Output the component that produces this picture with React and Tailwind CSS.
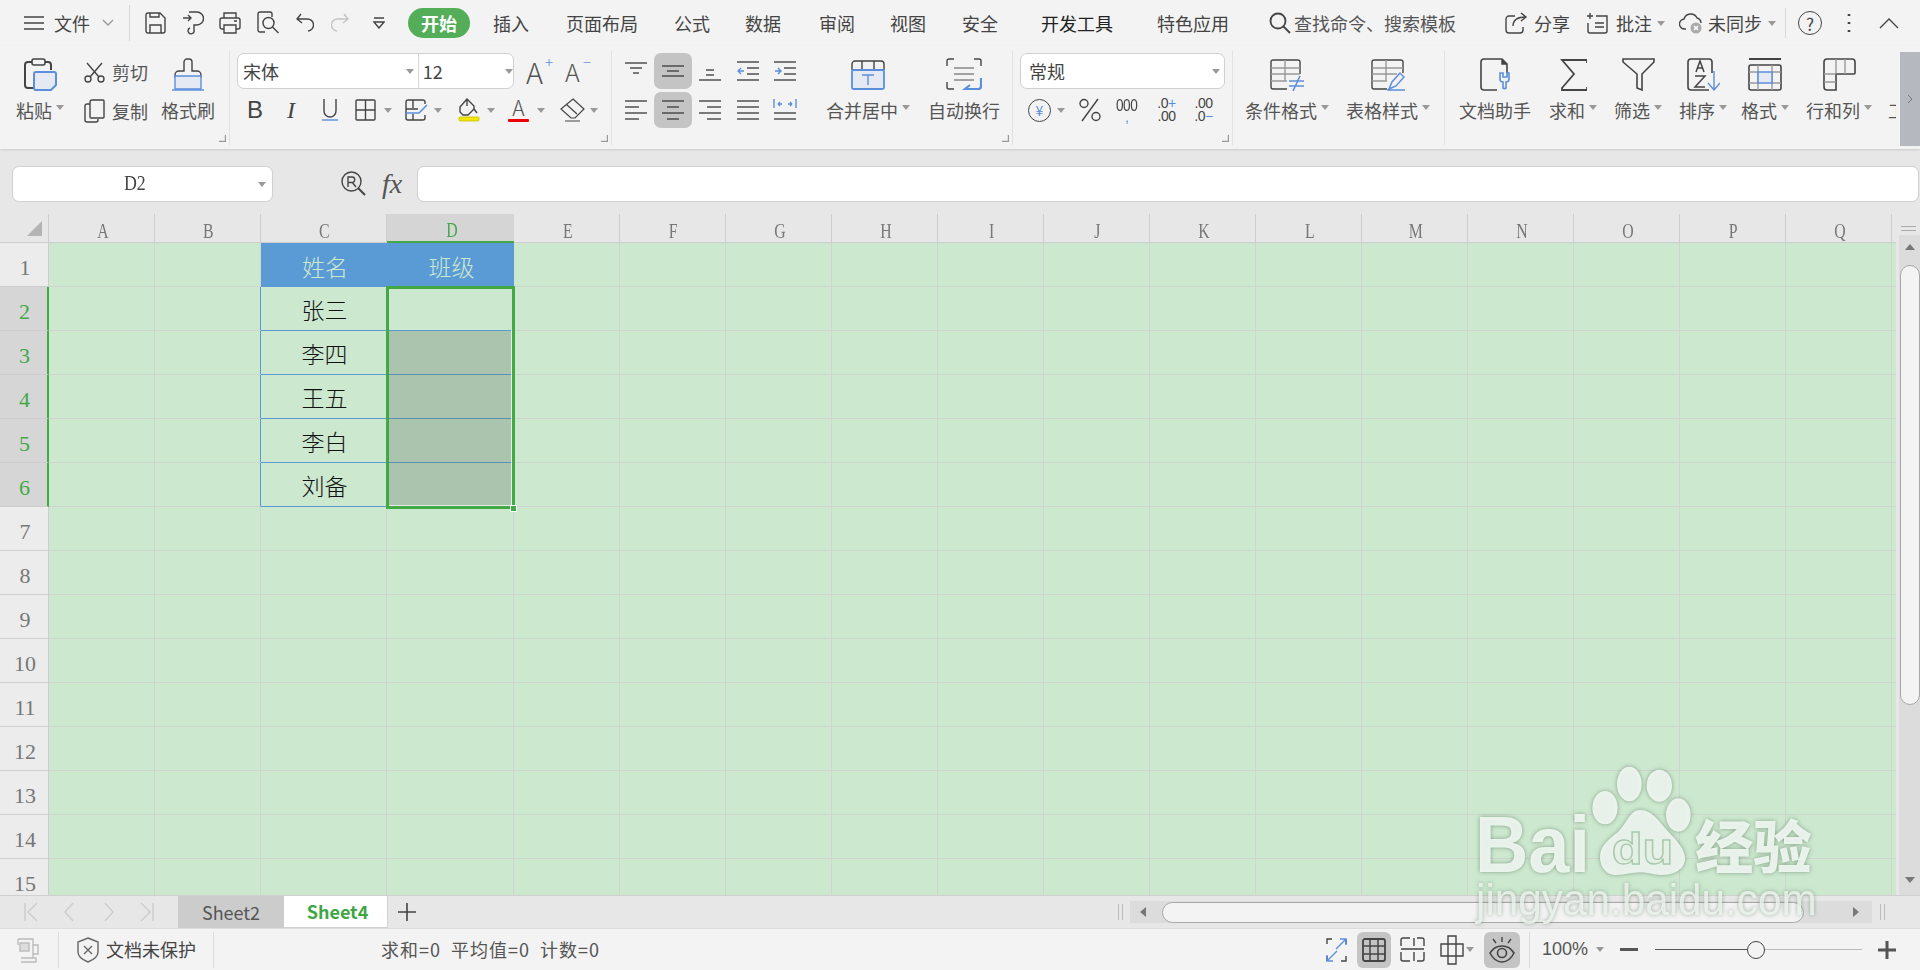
import React from 'react';

const INK = '#444';
const BLUE = '#5b8fdc';

const Svg = ({ w, h, children, className = '' }) => (
  <svg width={w} height={h} viewBox={`0 0 ${w} ${h}`} fill="none" stroke={INK} strokeWidth="1.4" className={`shrink-0 ${className}`}>
    {children}
  </svg>
);

const Caret = ({ className = '' }) => (
  <span className={`inline-block shrink-0 w-0 h-0 border-x-[4px] border-t-[5px] border-x-transparent border-t-[#999] ${className}`} />
);

const Corner = () => (
  <svg width="7" height="7" viewBox="0 0 7 7" className="absolute right-[3px] bottom-[3px]" fill="none" stroke="#999" strokeWidth="1.2">
    <path d="M0 6.4h6.4V0" />
  </svg>
);

// 大图标按钮：上面图标，下面文字
const Big = ({ icon, label, caret, className = '' }) => (
  <div className={`flex flex-col items-center shrink-0 pt-[7px] ${className}`}>
    <div className="h-[33px] flex items-center justify-center">{icon}</div>
    <div className="mt-[7px] h-[24px] flex items-center text-[18px] leading-[24px] text-[#555] whitespace-nowrap">
      {label}
      {caret && <Caret className="ml-[4px] -mt-[6px]" />}
    </div>
  </div>
);

const Section = ({ className = '', children, border = true }) => (
  <div className={`relative shrink-0 mt-[5px] mb-[4px] ${border ? 'border-r border-[#e2e2e2]' : ''} ${className}`}>{children}</div>
);

const tabs = [
  { t: '插入', c: 'ml-[23px]' },
  { t: '页面布局', c: 'ml-[37px]' },
  { t: '公式', c: 'ml-[36px]' },
  { t: '数据', c: 'ml-[35px]' },
  { t: '审阅', c: 'ml-[38px]' },
  { t: '视图', c: 'ml-[35px]' },
  { t: '安全', c: 'ml-[36px]' },
  { t: '开发工具', c: 'ml-[43px] text-[#222]' },
  { t: '特色应用', c: 'ml-[44px]' },
];

function TitleBar() {
  return (
    <div className="h-[46px] flex items-center text-[18px] text-[#444]">
      <Svg w={20} h={16} className="ml-[24px]"><path d="M0 2h20M0 8h20M0 14h20" /></Svg>
      <span className="ml-[10px]">文件</span>
      <Svg w={12} h={8} className="ml-[12px]"><path d="M1 1l5 5 5-5" stroke="#999" /></Svg>
      <div className="ml-[15px] w-px h-[36px] bg-[#d8d8d8]" />
      <Svg w={21} h={22} className="ml-[15px]"><path d="M3 1h12l5 5v13a2 2 0 0 1-2 2H3a2 2 0 0 1-2-2V3a2 2 0 0 1 2-2zM5 21v-8h11v8M5 1v4h9V1" /></Svg>
      <Svg w={21} h={24} className="ml-[17px]"><path d="M0 7h8M5 4l3 3-3 3M6 1h8a6 6 0 0 1 0 13h-3v5a3 3 0 1 1-4-2" /></Svg>
      <Svg w={22} h={22} className="ml-[15px]"><path d="M5 6V1h12v5M5 17H3a2 2 0 0 1-2-2V8a2 2 0 0 1 2-2h16a2 2 0 0 1 2 2v7a2 2 0 0 1-2 2h-2M5 13h12v8H5zM15 9h3" /></Svg>
      <Svg w={23} h={24} className="ml-[16px]"><path d="M8 21H3a2 2 0 0 1-2-2V3a2 2 0 0 1 2-2h10a2 2 0 0 1 2 2v3" /><circle cx="11.5" cy="12" r="5.5" /><path d="M15.5 16l6 6" /></Svg>
      <Svg w={18} h={20} className="ml-[16px]"><path d="M5 1L1 6l5 4M1 6h10a6 6 0 0 1 1 12" /></Svg>
      <Svg w={18} h={20} className="ml-[17px]"><path d="M13 1l4 5-5 4M17 6H7a6 6 0 0 0-1 12" stroke="#c4c4c4" /></Svg>
      <Svg w={12} h={12} className="ml-[24px]"><path d="M1 1h10M1 5h10l-5 6z" /></Svg>
      <div className="ml-[23px] w-[62px] h-[30px] rounded-full bg-[#54ad59] text-white font-bold flex items-center justify-center">开始</div>
      {tabs.map((x) => (
        <span key={x.t} className={x.c}>{x.t}</span>
      ))}
      <Svg w={22} h={22} className="ml-[40px]"><circle cx="9" cy="9" r="7.5" strokeWidth="1.8" /><path d="M14.5 14.5l6.5 6.5" strokeWidth="1.8" /></Svg>
      <span className="ml-[3px] text-[#555]">查找命令、搜索模板</span>
      <Svg w={23} h={22} className="ml-[49px]"><path d="M10 4H4a3 3 0 0 0-3 3v11a3 3 0 0 0 3 3h11a3 3 0 0 0 3-3v-3M8 14c0-6 5-9 13-9M16 1l5 4-5 4" /></Svg>
      <span className="ml-[6px]">分享</span>
      <Svg w={22} h={22} className="ml-[16px]"><path d="M4 1v6M1 4h6M10 4h11v15a2 2 0 0 1-2 2H4a2 2 0 0 1-2-2v-8M9 11h9M9 15h9" /></Svg>
      <span className="ml-[8px]">批注</span>
      <Caret className="ml-[5px]" />
      <Svg w={24} h={22} className="ml-[14px]">
        <path d="M7 17H6a5 5 0 0 1-1-10 7 7 0 0 1 13-1 5.500 5.500 0 0 1 4 5" />
        <circle cx="17" cy="16" r="5.500" fill="#aaa" stroke="none" />
        <path d="M15 14l4 4M19 14l-4 4" stroke="#fff" />
      </Svg>
      <span className="ml-[5px]">未同步</span>
      <Caret className="ml-[6px]" />
      <div className="ml-[9px] w-px h-[30px] bg-[#d8d8d8]" />
      <div className="ml-[12px] w-[24px] h-[24px] rounded-full border border-[#444] flex items-center justify-center text-[17px] leading-none">?</div>
      <Svg w={6} h={22} className="ml-[24px]"><path d="M3 2v2M3 10v2M3 18v2" strokeWidth="2.600" /></Svg>
      <Svg w={20} h={12} className="ml-[27px]"><path d="M1 11l9-9 9 9" /></Svg>
    </div>
  );
}

const Box = ({ className = '', children }) => (
  <div className={`h-[36px] bg-white border border-[#d0d0d0] rounded-[7px] flex items-center ${className}`}>{children}</div>
);

const AlignIcon = ({ lines, blue }) => (
  <Svg w={24} h={24}>
    {lines.map((l, i) => (
      <path key={i} d={`M${l[0]} ${l[2]}H${l[1]}`} />
    ))}
    {blue && <path d={blue} stroke={BLUE} />}
  </Svg>
);

const alignCells = [
  { lines: [[1, 23, 4], [6, 18, 9], [9, 15, 14]] },
  { lines: [[1, 23, 7], [6, 18, 12], [1, 23, 17]], on: true },
  { lines: [[8, 16, 11], [8, 16, 16], [1, 23, 21]] },
  { lines: [[1, 23, 3], [11, 23, 9], [11, 23, 15], [1, 23, 21]], blue: 'M8 12H2M5 9l-3 3 3 3' },
  { lines: [[1, 23, 3], [11, 23, 9], [11, 23, 15], [1, 23, 21]], blue: 'M2 12h6M5 9l3 3-3 3' },
  { lines: [[1, 23, 3], [1, 15, 9], [1, 23, 15], [1, 15, 21]] },
  { lines: [[1, 23, 3], [6, 18, 9], [1, 23, 15], [6, 18, 21]], on: true },
  { lines: [[1, 23, 3], [9, 23, 9], [1, 23, 15], [9, 23, 21]] },
  { lines: [[1, 23, 3], [1, 23, 9], [1, 23, 15], [1, 23, 21]] },
  { lines: [[1, 23, 15], [1, 23, 21]], blue: 'M1 1v9M23 1v9M5 6h4M5 6l2-2M5 6l2 2M19 6h-4M19 6l-2-2M19 6l-2 2' },
];

function Ribbon() {
  return (
    <div className="h-[103px] flex items-stretch bg-[#f3f3f3] relative z-10 shadow-[0_1px_2px_rgba(0,0,0,0.12)]">
      <Section className="w-[230px] flex">
        <Big
          className="w-[80px]"
          label="粘贴"
          caret
          icon={
            <Svg w={34} h={33}>
              <path d="M9 4H5a3 3 0 0 0-3 3v20a3 3 0 0 0 3 3h6M22 4h3a3 3 0 0 1 3 3v5" strokeWidth="2" />
              <rect x="9" y="1" width="13" height="6" rx="2" strokeWidth="1.600" />
              <path d="M13 14h18a2 2 0 0 1 2 2v11l-5 5H13a2 2 0 0 1-2-2V16a2 2 0 0 1 2-2z" fill="#e4e9f4" stroke={BLUE} strokeWidth="2" />
            </Svg>
          }
        />
        <div className="w-[64px] ml-[4px] mt-[3px] flex flex-col gap-[3px] text-[18px] text-[#555]">
          <div className="h-[36px] flex items-center gap-[7px]">
            <Svg w={21} h={21}><circle cx="4" cy="17" r="3" /><circle cx="17" cy="17" r="3" /><path d="M6 15L18 1M15 15L3 1" /></Svg>
            <span className="whitespace-nowrap">剪切</span>
          </div>
          <div className="h-[36px] flex items-center gap-[7px]">
            <Svg w={21} h={24}><path d="M6 5H3a2 2 0 0 0-2 2v14a2 2 0 0 0 2 2h9a2 2 0 0 0 2-2v-1" /><path d="M8 1h11a1 1 0 0 1 1 1v16a1 1 0 0 1-1 1H7a1 1 0 0 1-1-1V3a2 2 0 0 1 2-2z" /></Svg>
            <span className="whitespace-nowrap">复制</span>
          </div>
        </div>
        <Big
          className="w-[80px]"
          label="格式刷"
          icon={
            <Svg w={32} h={33}>
              <path d="M12 13V4a3 3 0 0 1 3-3h2a3 3 0 0 1 3 3v9h5a4 4 0 0 1 4 4v2H3v-2a4 4 0 0 1 4-4z" />
              <path d="M3 18h26v13H3z" fill="#e4e9f4" stroke={BLUE} />
              <path d="M0 32h32" stroke={BLUE} />
            </Svg>
          }
        />
        <Corner />
      </Section>

      <Section className="w-[382px] pl-[7px]">
        <div className="mt-[2px] flex items-center">
          <Box className="w-[277px] text-[18px] text-[#444]">
            <span className="ml-[5px] w-[164px]">宋体</span>
            <Caret />
            <div className="ml-[4px] w-px h-full bg-[#d8d8d8]" />
            <span className="ml-[4px] w-[83px]">12</span>
            <Caret />
          </Box>
          <span className="ml-[12px] relative w-[21px] h-[30px] text-[29px] leading-[30px] text-[#555] font-light">
            A<span className="absolute -right-[6px] -top-[2px] text-[15px] leading-none text-[#5b8fdc]">+</span>
          </span>
          <span className="ml-[18px] relative w-[20px] h-[28px] text-[25px] leading-[28px] text-[#555] font-light">
            A<span className="absolute -right-[6px] -top-[3px] text-[15px] leading-none text-[#5b8fdc]">−</span>
          </span>
        </div>
        <div className="mt-[3px] h-[36px] flex items-center text-[#444]">
          <span className="w-[36px] text-center text-[24px] leading-none font-['Liberation_Sans',sans-serif]">B</span>
          <span className="w-[36px] text-center text-[24px] leading-none font-['Liberation_Serif',serif] italic">I</span>
          <Svg w={16} h={24} className="ml-[13px] mr-[7px]"><path d="M2 1v12a6 6 0 0 0 12 0V1" /><path d="M0 22h16" stroke={BLUE} /></Svg>
          <Svg w={21} h={22} className="ml-[10px]"><rect x="1" y="1" width="19" height="20" rx="1" /><path d="M10.500 1v20M1 11h19" /></Svg>
          <Caret className="ml-[8px]" />
          <Svg w={23} h={22} className="ml-[13px]"><path d="M20 5V3a2 2 0 0 0-2-2H3a2 2 0 0 0-2 2v16a2 2 0 0 0 2 2h15a2 2 0 0 0 2-2v-3M1 10h12M8 1v8M8 15v6" /><path d="M1 14h13l8-8" stroke={BLUE} strokeWidth="1.600" /></Svg>
          <Caret className="ml-[6px]" />
          <Svg w={22} h={24} className="ml-[16px]"><path d="M9 1l7 7v3l-6 6H5l-3-3V9zM9 1v7" /><path d="M16 11l3 4" /><rect x="1" y="19" width="20" height="4" rx="1" fill="#f4e800" stroke="#c8be00" strokeWidth="0.800" /></Svg>
          <Caret className="ml-[7px]" />
          <div className="ml-[13px] w-[21px] h-[28px] flex flex-col items-center">
            <span className="text-[21px] leading-[23px] text-[#555] font-light">A</span>
            <span className="w-full h-[3px] bg-[#ee0000] rounded-[1px]" />
          </div>
          <Caret className="ml-[8px]" />
          <Svg w={25} h={24} className="ml-[15px]"><path d="M13 1l11 10-9 9h-4L1 11zM6 6l11 10M5 23h15" strokeWidth="1.200" /></Svg>
          <Caret className="ml-[5px]" />
        </div>
        <Corner />
      </Section>

      <Section className="w-[401px] pl-[5px] flex">
        <div className="mt-[2px] w-[187px] h-[75px] grid grid-cols-5 grid-rows-2 gap-y-[3px]">
          {alignCells.map((c, i) => (
            <div key={i} className={`flex items-center justify-center rounded-[7px] ${c.on ? 'bg-[#c4c4c4]' : ''}`}>
              <AlignIcon lines={c.lines} blue={c.blue} />
            </div>
          ))}
        </div>
        <Big
          className="ml-[21px] w-[86px]"
          label="合并居中"
          caret
          icon={
            <Svg w={34} h={30}>
              <path d="M1 10V4a3 3 0 0 1 3-3h26a3 3 0 0 1 3 3v6M11 1v9M23 1v9" />
              <rect x="1" y="10" width="32" height="19" rx="1.500" fill="#e4e9f4" stroke={BLUE} strokeWidth="1.800" />
              <path d="M11 15h12M17 15v10" stroke={BLUE} />
            </Svg>
          }
        />
        <Big
          className="ml-[12px] w-[82px]"
          label="自动换行"
          icon={
            <Svg w={36} h={33}>
              <path d="M8 1H3a2 2 0 0 0-2 2v5M28 1h5a2 2 0 0 1 2 2v5M1 24v5a2 2 0 0 0 2 2h5" />
              <path d="M8 10h20M8 16h20M8 22h20" stroke="#888" />
              <path d="M35 20v8a3 3 0 0 1-3 3H19M24 27l-5 4 5 0" stroke={BLUE} strokeWidth="2.200" />
            </Svg>
          }
        />
        <Corner />
      </Section>

      <Section className="w-[220px]">
        <Box className="ml-[7px] mt-[2px] w-[205px] text-[18px] text-[#444]">
          <span className="ml-[8px] w-[183px]">常规</span>
          <Caret />
        </Box>
        <div className="mt-[3px] h-[36px] flex items-center">
          <div className="ml-[15px] w-[23px] h-[23px] rounded-full border border-[#444] flex items-center justify-center text-[14px] leading-none text-[#5b8fdc]">¥</div>
          <Caret className="ml-[6px]" />
          <Svg w={22} h={24} className="ml-[14px]"><circle cx="5" cy="5.500" r="4" /><circle cx="17" cy="18.500" r="4" /><path d="M19 1L3 23" /></Svg>
          <div className="ml-[16px] w-[20px] flex flex-col items-center leading-none font-['Liberation_Sans',sans-serif] text-[#444]">
            <span className="text-[16px] leading-[15px] tracking-[-0.5px] scale-x-[0.85]">000</span>
            <span className="text-[14px] leading-[9px] text-[#5b8fdc]">,</span>
          </div>
          <div className="ml-[19px] w-[21px] flex flex-col items-center font-['Liberation_Sans',sans-serif] text-[14px] leading-[13px] text-[#444] tracking-[-0.5px]">
            <span className="whitespace-nowrap">.0<span className="text-[#5b8fdc]">+</span></span>
            <span className="whitespace-nowrap">.00</span>
          </div>
          <div className="ml-[16px] w-[21px] flex flex-col items-center font-['Liberation_Sans',sans-serif] text-[14px] leading-[13px] text-[#444] tracking-[-0.5px]">
            <span className="whitespace-nowrap">.00</span>
            <span className="whitespace-nowrap">.0<span className="text-[#5b8fdc]">−</span></span>
          </div>
        </div>
        <Corner />
      </Section>

      <Section className="w-[212px] flex">
        <Big
          className="ml-[8px] w-[92px]"
          label="条件格式"
          caret
          icon={
            <Svg w={35} h={32}>
              <path d="M30 15V3a2 2 0 0 0-2-2H3a2 2 0 0 0-2 2v25a2 2 0 0 0 2 2h14" />
              <path d="M1 9h29M1 15h29M1 22h16M15 1v21" stroke="#999" />
              <path d="M19 22h15M19 27h15M30 17l-7 15" stroke={BLUE} strokeWidth="1.600" />
            </Svg>
          }
        />
        <Big
          className="ml-[9px] w-[92px]"
          label="表格样式"
          caret
          icon={
            <Svg w={34} h={32}>
              <path d="M32 14V3a2 2 0 0 0-2-2H3a2 2 0 0 0-2 2v25a2 2 0 0 0 2 2h13" />
              <path d="M1 9h31M1 15h25M1 22h15M15 1v21" stroke="#999" />
              <path d="M18 30l3-7 8-9 4 4-8 9zM16 31h18" stroke={BLUE} strokeWidth="1.500" />
            </Svg>
          }
        />
      </Section>

      <Section className="w-[455px] flex overflow-hidden" border={false}>
        <Big
          className="ml-[10px] w-[80px]"
          label="文档助手"
          icon={
            <Svg w={31} h={33}>
              <path d="M17 32H4a3 3 0 0 1-3-3V4a3 3 0 0 1 3-3h18l5 5v9" strokeWidth="1.600" />
              <path d="M22 1v5h5" fill="#444" />
              <path d="M20 15v6a3 3 0 0 0 3 3v6a2.500 2.500 0 0 0 3 0v-6a3 3 0 0 0 3-3v-6l-2 0v4h-4v-4z" stroke={BLUE} strokeWidth="1.600" />
            </Svg>
          }
        />
        <Big
          className="ml-[10px] w-[56px]"
          label="求和"
          caret
          icon={<Svg w={27} h={32}><path d="M27 4V1H2l12 14L2 29v2h25v-3" strokeWidth="1.800" /></Svg>}
        />
        <Big
          className="ml-[10px] w-[54px]"
          label="筛选"
          caret
          icon={<Svg w={33} h={33}><path d="M1 1h31v3L20 16v16l-5-2V16L1 4z" strokeWidth="1.600" /></Svg>}
        />
        <Big
          className="ml-[10px] w-[56px]"
          label="排序"
          caret
          icon={
            <Svg w={33} h={33}>
              <path d="M22 32H4a3 3 0 0 1-3-3V4a3 3 0 0 1 3-3h18a3 3 0 0 1 3 3v11" strokeWidth="1.600" />
              <path d="M27 13v18M21 25l6 7 6-7" stroke={BLUE} />
              <path d="M9 14l4-11 4 11M10 10h6M8 18h10L8 29h10" strokeWidth="1.500" />
            </Svg>
          }
        />
        <Big
          className="ml-[7px] w-[54px]"
          label="格式"
          caret
          icon={
            <Svg w={34} h={33}>
              <path d="M1 1h32" strokeWidth="2" />
              <rect x="1" y="7" width="32" height="25" rx="2" strokeWidth="1.600" />
              <path d="M1 14h9M24 14h9M1 25h9M24 25h9M10 7v25M24 7v25" stroke="#999" />
              <rect x="10" y="14" width="14" height="11" stroke={BLUE} strokeWidth="1.500" fill="#e4e9f4" />
            </Svg>
          }
        />
        <Big
          className="ml-[10px] w-[74px]"
          label="行和列"
          caret
          icon={
            <Svg w={33} h={33}>
              <path d="M13 32H4a3 3 0 0 1-3-3V4a3 3 0 0 1 3-3h25a3 3 0 0 1 3 3v11a1 1 0 0 1-1 1H13z" strokeWidth="1.600" />
              <path d="M1 16h12M1 24h12M13 1v15M22 1v15" stroke="#999" />
            </Svg>
          }
        />
        <div className="ml-[12px] w-[8px] overflow-hidden flex flex-col pt-[7px]">
          <div className="h-[33px]" />
          <div className="mt-[7px] h-[24px] text-[18px] leading-[24px] text-[#555] whitespace-nowrap">工作表</div>
        </div>
      </Section>

      <div className="mt-[6px] mb-[3px] w-[20px] bg-[#b5b8be] flex items-center justify-center">
        <Svg w={6} h={10}><path d="M1 1l4 4-4 4" stroke="#777" strokeWidth="1" /></Svg>
      </div>
    </div>
  );
}

function FormulaBar() {
  return (
    <div className="h-[65px] bg-[#e7e7e7] flex items-start pt-[17px]">
      <Box className="ml-[12px] w-[261px] relative justify-center pr-[16px] font-['Liberation_Serif',serif] text-[#444]">
        <span className="inline-block text-[21px] scale-x-[0.85]">D2</span>
        <Caret className="absolute right-[6px] top-[15px]" />
      </Box>
      <Svg w={25} h={25} className="ml-[68px] mt-[5px]"><circle cx="10.500" cy="10.500" r="9.500" /><path d="M17 17l7 7" strokeWidth="2" /><path d="M7 16V6h4a2.500 2.500 0 0 1 0 5.500H7M11 11l4 5" /></Svg>
      <span className="ml-[16px] mt-[3px] w-[23px] text-[28px] leading-[30px] italic text-[#555] font-['Liberation_Serif',serif]">fx</span>
      <Box className="ml-[12px] flex-1 mr-[1px]" />
    </div>
  );
}

const COLS = 'ABCDEFGHIJKLMNOPQR'.split('');
const ROWS = Array.from({ length: 15 }, (_, i) => i + 1);
const NAMES = { 1: '姓名', 2: '张三', 3: '李四', 4: '王五', 5: '李白', 6: '刘备' };
const GREEN = 'text-[#43a846]';

function cellClass(col, row) {
  if (row === 1 && col === 'C') return 'bg-[#5b9bd5] text-[#cce8cf]';
  if (row === 1 && col === 'D') return 'bg-[#5b9bd5] text-[#cce8cf]';
  if (row >= 2 && row <= 6) {
    if (col === 'B') return 'border-b border-r border-b-[#cdd5ce] border-r-[#5b9bd5] text-[#111]';
    if (col === 'C') return 'border-b border-r border-[#5b9bd5] text-[#111]';
    if (col === 'D' && row === 2) return 'border-b border-r border-[#5b9bd5]';
    if (col === 'D') return 'bg-[#abc4ad] border-b border-r border-[#5b8fb5]';
  }
  return 'border-b border-r border-[#cdd5ce]';
}

function Sheet() {
  return (
    <div className="relative w-[1896px] h-[681px] overflow-hidden">
      <div className="grid grid-cols-[49px_106px_106px_126px_127px_repeat(14,106px)] grid-rows-[29px_repeat(15,44px)] bg-[#cce8cf] font-['Liberation_Serif','Noto_Sans_CJK_SC',serif]">
        <div className="bg-[#e7e7e7] border-r border-b border-[#cdcdcd] flex items-end justify-end pr-[6px] pb-[6px]">
          <svg width="15" height="15" viewBox="0 0 15 15"><path d="M15 0v15H0z" fill="#b4b4b4" /></svg>
        </div>
        {COLS.map((c) => (
          <div
            key={c}
            className={`flex items-center justify-center text-[22px] pt-[4px] pl-[2px] ${c === 'D' ? 'bg-[#d5d5d5] border-b-2 border-[#43a846] ' + GREEN : 'bg-[#e7e7e7] border-r border-b border-[#cdcdcd] text-[#777]'}`}
          >
            <span className="inline-block scale-x-[0.72]">{c}</span>
          </div>
        ))}
        {ROWS.map((r) => (
          <React.Fragment key={r}>
            <div
              className={`flex items-center justify-center text-[22px] pt-[5px] pl-[2px] border-b border-[#cdcdcd] ${r >= 2 && r <= 6 ? 'bg-[#d6d6d6] border-r-2 border-r-[#43a846] ' + GREEN : 'bg-[#ececec] border-r text-[#777]'}`}
            >
              {r}
            </div>
            {COLS.map((c) => (
              <div
                key={c}
                className={`flex items-center justify-center pt-[2px] pl-[2px] font-['Noto_Sans_CJK_SC',sans-serif] text-[23px] font-light ${cellClass(c, r)}`}
              >
                {c === 'C' && NAMES[r]}
                {c === 'D' && r === 1 && '班级'}
              </div>
            ))}
          </React.Fragment>
        ))}
      </div>
      {/* 选区框 */}
      <div className="absolute left-[386px] top-[72px] w-[129px] h-[223px] border-[3px] border-[#43a846]">
        <div className="absolute right-0 top-[41px] bottom-0 w-px bg-white/70" />
        <div className="absolute left-0 right-0 bottom-0 h-px bg-white/70" />
      </div>
      <div className="absolute left-[510px] top-[291px] w-[7px] h-[7px] bg-[#43a846] border border-white" />
    </div>
  );
}

function VScroll() {
  return (
    <div className="w-[24px] h-[681px] bg-[#e7e7e7] flex flex-col items-end">
      <div className="h-[21px] w-full flex flex-col items-center justify-center gap-[3px]">
        <span className="w-[15px] h-px bg-[#aaa] mt-[8px]" />
        <span className="w-[15px] h-px bg-[#aaa]" />
      </div>
      <div className="flex-1 w-[21px] bg-[#dcdcdc] flex flex-col items-center">
        <span className="mt-[9px] h-0 w-0 border-x-[5px] border-b-[6px] border-x-transparent border-b-[#777]" />
        <div className="mt-[15px] w-[20px] h-[440px] rounded-[10px] border border-[#a8a8a8] bg-[#f3f3f3]" />
        <span className="mt-[172px] h-0 w-0 border-x-[5px] border-t-[6px] border-x-transparent border-t-[#777]" />
      </div>
    </div>
  );
}

function TabBar() {
  return (
    <div className="h-[33px] bg-[#e7e7e7] flex items-stretch border-t border-[#d0d0d0]">
      <div className="w-[178px] flex items-center">
        <Svg w={14} h={20} className="ml-[24px]"><path d="M1 1v18M13 1L4 10l9 9" stroke="#ccc" /></Svg>
        <Svg w={10} h={20} className="ml-[26px]"><path d="M9 1l-8 9 8 9" stroke="#ccc" /></Svg>
        <Svg w={10} h={20} className="ml-[30px]"><path d="M1 1l8 9-8 9" stroke="#ccc" /></Svg>
        <Svg w={14} h={20} className="ml-[26px]"><path d="M13 1v18M1 1l9 9-9 9" stroke="#ccc" /></Svg>
      </div>
      <div className="w-[106px] bg-[#cccccc] flex items-center justify-center text-[18px] text-[#555]">Sheet2</div>
      <div className="w-[104px] pl-[4px] bg-white border-b border-r border-[#d0d0d0] flex items-center justify-center text-[18px] font-bold text-[#3fa648]">Sheet4</div>
      <div className="w-[38px] flex items-center justify-center">
        <Svg w={20} h={20}><path d="M10 1v18M1 10h18" strokeWidth="1.600" /></Svg>
      </div>
      <div className="w-[692px]" />
      <div className="w-[5px] flex items-center"><span className="w-[5px] h-[16px] border-x border-[#bbb]" /></div>
      <div className="ml-[7px] my-[5px] w-[742px] bg-[#dcdcdc] flex items-center">
        <span className="ml-[10px] h-0 w-0 border-y-[5px] border-r-[6px] border-y-transparent border-r-[#777]" />
        <div className="ml-[16px] w-[642px] h-[21px] rounded-full border border-[#a8a8a8] bg-[#f3f3f3]" />
        <span className="ml-[49px] h-0 w-0 border-y-[5px] border-l-[6px] border-y-transparent border-l-[#777]" />
      </div>
      <div className="ml-[8px] w-[5px] flex items-center"><span className="w-[5px] h-[16px] border-x border-[#bbb]" /></div>
    </div>
  );
}

function StatusBar() {
  return (
    <div className="h-[42px] bg-[#f3f3f3] border-t border-[#dcdcdc] flex items-center text-[18px] text-[#555]">
      <Svg w={23} h={26} className="ml-[17px]">
        <path d="M1 2h15v19M1 2v6M16 8h5v9h-5M4 21h15v4H4" stroke="#bbb" />
        <rect x="3" y="6" width="9" height="8" fill="#ddd" stroke="#bbb" />
      </Svg>
      <div className="ml-[18px] w-px h-[36px] bg-[#dcdcdc]" />
      <Svg w={22} h={26} className="ml-[18px]"><path d="M11 1l10 4v10c0 5-5 8-10 10C6 23 1 20 1 15V5z" stroke="#666" /><path d="M7 9l8 8M15 9l-8 8" stroke="#666" /></Svg>
      <span className="ml-[7px] text-[#444]">文档未保护</span>
      <div className="ml-[17px] w-px h-[36px] bg-[#dcdcdc]" />
      <span className="ml-[167px] whitespace-nowrap tracking-[1px]">求和=0</span>
      <span className="ml-[10px] whitespace-nowrap tracking-[1px]">平均值=0</span>
      <span className="ml-[10px] whitespace-nowrap tracking-[1px]">计数=0</span>
      <div className="flex-1" />
      <Svg w={21} h={24}>
        <path d="M1 6V1h5M15 23h5v-5M20 6V1M1 18v5" stroke="#444" />
        <path d="M10 11l10-10M14 1h6v6M11 13L1 23M1 17v6h6" stroke={BLUE} />
      </Svg>
      <div className="ml-[10px] w-[34px] h-[36px] rounded-[6px] bg-[#c4c4c4] flex items-center justify-center">
        <Svg w={24} h={24}><rect x="1" y="1" width="22" height="22" rx="2" strokeWidth="1.800" /><path d="M8 1v22M16 1v22M1 8h22M1 16h22" strokeWidth="1.500" /></Svg>
      </div>
      <Svg w={25} h={25} className="ml-[9px]"><path d="M10 1H3a2 2 0 0 0-2 2v6M24 9V3a2 2 0 0 0-2-2h-5M1 15v7a2 2 0 0 0 2 2h7M17 24h5a2 2 0 0 0 2-2v-7M1 12h23M14 1v8M14 15v9" /></Svg>
      <Svg w={24} h={30} className="ml-[15px]"><path d="M8 1h8v28H8zM1 9h22v12H1zM8 9h8M8 21h8" /></Svg>
      <Caret className="ml-[2px]" />
      <div className="ml-[10px] w-[36px] h-[36px] rounded-[6px] bg-[#c4c4c4] flex items-center justify-center">
        <Svg w={26} h={28}>
          <path d="M1 17c3-5 7-7 12-7s9 2 12 7c-3 6-7 9-12 9S4 23 1 17z" strokeWidth="1.600" />
          <circle cx="13" cy="17" r="4.500" strokeWidth="1.600" />
          <path d="M13 1v5M4 3l3 4M22 3l-3 4" />
        </Svg>
      </div>
      <div className="ml-[9px] w-px h-[36px] bg-[#dcdcdc]" />
      <span className="ml-[12px] whitespace-nowrap font-['Liberation_Sans',sans-serif]">100%</span>
      <Caret className="ml-[8px]" />
      <span className="ml-[16px] w-[18px] h-[3px] bg-[#555]" />
      <div className="ml-[17px] w-[207px] flex items-center">
        <span className="w-[92px] h-px bg-[#555]" />
        <span className="w-[18px] h-[18px] rounded-full border border-[#444] bg-[#f3f3f3]" />
        <span className="flex-1 h-px bg-[#bbb]" />
      </div>
      <Svg w={18} h={18} className="ml-[16px] mr-[24px]"><path d="M9 0v18M0 9h18" stroke="#555" strokeWidth="3" /></Svg>
    </div>
  );
}

// 百度经验水印
function Watermark() {
  return (
    <svg width="480" height="200" viewBox="0 0 1440 600" className="absolute left-[1440px] top-[740px] pointer-events-none drop-shadow-[0_0_2px_rgba(60,90,60,0.55)]" fill="#f1f8f2" fillOpacity="0.92">
      <ellipse cx="568" cy="132" rx="37" ry="52" />
      <ellipse cx="658" cy="137" rx="38" ry="48" />
      <ellipse cx="495" cy="203" rx="38" ry="50" />
      <ellipse cx="715" cy="225" rx="37" ry="50" />
      <path d="M600 210c40 0 60 40 85 65 30 30 50 55 50 80 0 35-35 50-70 50-25 0-40-8-65-8s-45 8-70 8c-40 0-50-35-50-55 0-35 30-55 55-75 25-25 35-65 65-65z" />
      <text x="105" y="397" fontFamily="Liberation Sans" fontWeight="700" fontSize="240" textLength="345" lengthAdjust="spacingAndGlyphs">Bai</text>
      <text x="515" y="372" fontFamily="Liberation Sans" fontWeight="700" fontSize="135" textLength="185" lengthAdjust="spacingAndGlyphs" stroke="#a8c9ac" strokeWidth="4" fill="#e4f1e5">du</text>
      <text x="765" y="385" fontFamily="Noto Sans CJK SC" fontWeight="900" fontSize="172" textLength="350" lengthAdjust="spacingAndGlyphs">经验</text>
      <text x="108" y="525" fontFamily="Liberation Sans" fontSize="132" textLength="1022" lengthAdjust="spacingAndGlyphs" fillOpacity="0.8">jingyan.baidu.com</text>
    </svg>
  );
}

export default function App() {
  return (
    <div className="relative w-[1920px] h-[970px] overflow-hidden bg-[#f3f3f3] font-['Noto_Sans_CJK_SC',sans-serif]">
      <TitleBar />
      <Ribbon />
      <FormulaBar />
      <div className="flex">
        <Sheet />
        <VScroll />
      </div>
      <TabBar />
      <StatusBar />
      <Watermark />
    </div>
  );
}
